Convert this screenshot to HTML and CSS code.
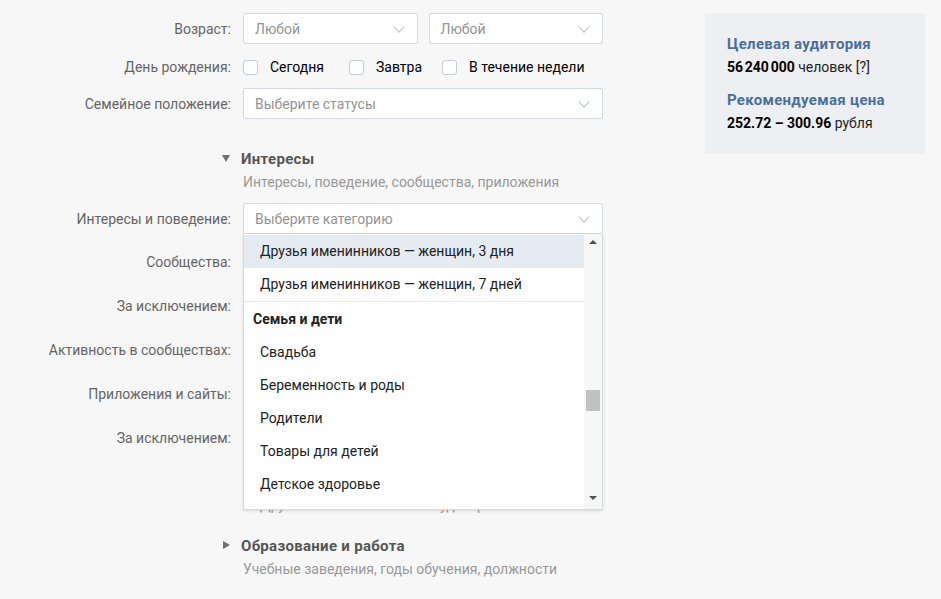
FILE: index.html
```html
<!DOCTYPE html>
<html lang="ru">
<head>
    <meta charset="UTF-8">
    <title>Настройки аудитории</title>
    <link rel="stylesheet" href="styles.css">
</head>
<body>
    <div class="page">
        <div class="form">
            <div class="row row-select">
                <label>Возраст:</label>
                <div class="pair">
                    <div class="select"><span>Любой</span><i class="chev"></i></div>
                    <div class="select"><span>Любой</span><i class="chev"></i></div>
                </div>
            </div>
            <div class="row row-checks">
                <label>День рождения:</label>
                <div class="checks">
                    <span class="check"><i class="box"></i>Сегодня</span>
                    <span class="check"><i class="box"></i>Завтра</span>
                    <span class="check"><i class="box"></i>В течение недели</span>
                </div>
            </div>
            <div class="row row-select">
                <label>Семейное положение:</label>
                <div class="select"><span>Выберите статусы</span><i class="chev"></i></div>
            </div>

            <div class="section">
                <div class="section-title"><i class="tri tri-down"></i>Интересы</div>
                <div class="section-sub">Интересы, поведение, сообщества, приложения</div>
            </div>

            <div class="row row-select">
                <label>Интересы и поведение:</label>
                <div class="field-wrap">
                    <div class="select"><span>Выберите категорию</span><i class="chev"></i></div>

                    <!-- open dropdown -->
                    <div class="dropdown">
                        <div class="dropdown-list">
                            <div class="item active">Друзья именинников — женщин, 3 дня</div>
                            <div class="item">Друзья именинников — женщин, 7 дней</div>
                            <div class="group">Семья и дети</div>
                            <div class="item">Свадьба</div>
                            <div class="item">Беременность и роды</div>
                            <div class="item">Родители</div>
                            <div class="item">Товары для детей</div>
                            <div class="item">Детское здоровье</div>
                            <div class="item">Детская одежда</div>
                        </div>
                        <div class="scrollbar">
                            <i class="arrow arrow-up"></i>
                            <div class="track"><div class="thumb"></div></div>
                            <i class="arrow arrow-down"></i>
                        </div>
                    </div>
                </div>
            </div>
            <div class="row row-gap">
                <label>Сообщества:</label>
                <div class="select"><span></span></div>
            </div>
            <div class="row row-gap">
                <label>За исключением:</label>
                <div class="select"><span></span></div>
            </div>
            <div class="row row-gap">
                <label>Активность в сообществах:</label>
                <div class="select"><span></span></div>
            </div>
            <div class="row row-gap">
                <label>Приложения и сайты:</label>
                <div class="select"><span></span></div>
            </div>
            <div class="row row-gap">
                <label>За исключением:</label>
                <div class="select"><span></span></div>
            </div>
            <div class="hint">Друзья пользователей из аудитории</div>

            <div class="section section-closed">
                <div class="section-title"><i class="tri tri-right"></i>Образование и работа</div>
                <div class="section-sub">Учебные заведения, годы обучения, должности</div>
            </div>
        </div>

        <div class="summary">
            <div class="summary-title">Целевая аудитория</div>
            <div class="summary-value"><b>56&#8239;240&#8239;000</b> человек [?]</div>
            <div class="summary-title second">Рекомендуемая цена</div>
            <div class="summary-value"><b>252.72 – 300.96</b> рубля</div>
        </div>
    </div>
</body>
</html>
```

FILE: styles.css
```css
body {
    margin: 0;
    background-color: #f7f7f7;
    font-family: Roboto, "Liberation Sans", Arial, sans-serif;
    font-size: 14px;
    color: #000;
}

.page {
    display: flex;
    align-items: flex-start;
    gap: 102px;
    padding-top: 13px;
}

.form {
    width: 603px;
}

/* rows: label column + field column */
.row {
    display: grid;
    grid-template-columns: 231px 360px;
    column-gap: 12px;
    align-items: center;
}

.row label {
    text-align: right;
    color: #656565;
}

.row-select {
    height: 31px;
}

.row-checks {
    height: 28px;
    margin: 9px 0 7px;
}

.row-gap {
    height: 32px;
    margin-top: 12px;
}

.row-gap:first-of-type {
    margin-top: 13px;
}

.pair {
    display: flex;
    gap: 11px;
}

.pair .select {
    flex: 1;
}

.select {
    box-sizing: border-box;
    height: 31px;
    display: flex;
    align-items: center;
    justify-content: space-between;
    padding: 0 11px;
    background-color: #fff;
    border: 1px solid #d3d9de;
    border-radius: 2px;
    color: #939393;
}

.row-gap .select {
    height: 32px;
}

.chev {
    width: 7px;
    height: 7px;
    border-right: 1px solid #b8c0c8;
    border-bottom: 1px solid #b8c0c8;
    transform: rotate(45deg);
    margin: -4px 3px 0 0;
}

/* checkboxes */
.checks {
    display: flex;
    align-items: center;
    white-space: nowrap;
}

.check {
    display: flex;
    align-items: center;
    flex-shrink: 0;
    margin-right: 25px;
}

.check:nth-child(2) {
    margin-right: 20px;
}

.box {
    box-sizing: border-box;
    width: 15px;
    height: 15px;
    margin-right: 12px;
    background-color: #fff;
    border: 1px solid #c5ccd3;
    border-radius: 3px;
}

/* collapsible sections */
.section {
    margin: 30px 0 11px 243px;
}

.section-title {
    position: relative;
    font-size: 15px;
    letter-spacing: 0.3px;
    font-weight: bold;
    color: #555;
    line-height: 20px;
    margin-left: -2px;
}

.tri {
    position: absolute;
    left: -19px;
    top: 6px;
    width: 0;
    height: 0;
}

.tri-down {
    border-left: 4px solid transparent;
    border-right: 4px solid transparent;
    border-top: 7px solid #707070;
}

.tri-right {
    left: -18px;
    top: 5px;
    border-top: 4px solid transparent;
    border-bottom: 4px solid transparent;
    border-left: 7px solid #707070;
}

.section-sub {
    color: #999;
    line-height: 20px;
    margin-top: 3px;
}

.section-closed {
    margin-top: 22px;
}

.hint {
    margin: 42px 0 0 260px;
    color: #999;
    line-height: 18px;
    white-space: nowrap;
}

/* dropdown menu */
.field-wrap {
    position: relative;
}

.dropdown {
    position: absolute;
    top: 100%;
    left: 0;
    z-index: 2;
    box-sizing: border-box;
    width: 360px;
    height: 276px;
    display: flex;
    background-color: #fff;
    border: 1px solid #d3d9de;
    border-top: none;
    box-shadow: 0 1px 3px rgba(0, 0, 0, 0.12);
    overflow: hidden;
}

.dropdown-list {
    flex: 1;
    overflow: hidden;
    padding-top: 1px;
}

.item {
    height: 33px;
    line-height: 33px;
    padding-left: 16px;
    color: #222;
    white-space: nowrap;
}

.item.active {
    background-color: #e5ebf1;
}

.group {
    height: 34px;
    line-height: 34px;
    padding-left: 9px;
    font-weight: bold;
    color: #222;
    border-top: 1px solid #e7e8ec;
}

.scrollbar {
    width: 18px;
    display: flex;
    flex-direction: column;
    align-items: center;
    background-color: #f7f7f7;
}

.arrow {
    width: 0;
    height: 0;
    border-left: 4px solid transparent;
    border-right: 4px solid transparent;
}

.arrow-up {
    margin-top: 6px;
    border-bottom: 4px solid #505050;
}

.arrow-down {
    margin-bottom: 9px;
    border-top: 4px solid #505050;
}

.track {
    flex: 1;
    align-self: stretch;
    padding: 0 2px;
}

.thumb {
    height: 21px;
    margin-top: 146px;
    background-color: #c1c1c1;
}

/* right side summary */
.summary {
    box-sizing: border-box;
    width: 220px;
    height: 141px;
    padding: 21px 22px;
    background-color: #edeff2;
}

.summary-title {
    font-size: 15px;
    letter-spacing: 0.3px;
    font-weight: bold;
    color: #4a6f99;
    line-height: 20px;
}

.summary-title.second {
    margin-top: 13px;
}

.summary-value {
    line-height: 20px;
    margin-top: 3px;
    color: #222;
}

.summary-value b {
    color: #000;
}
```
